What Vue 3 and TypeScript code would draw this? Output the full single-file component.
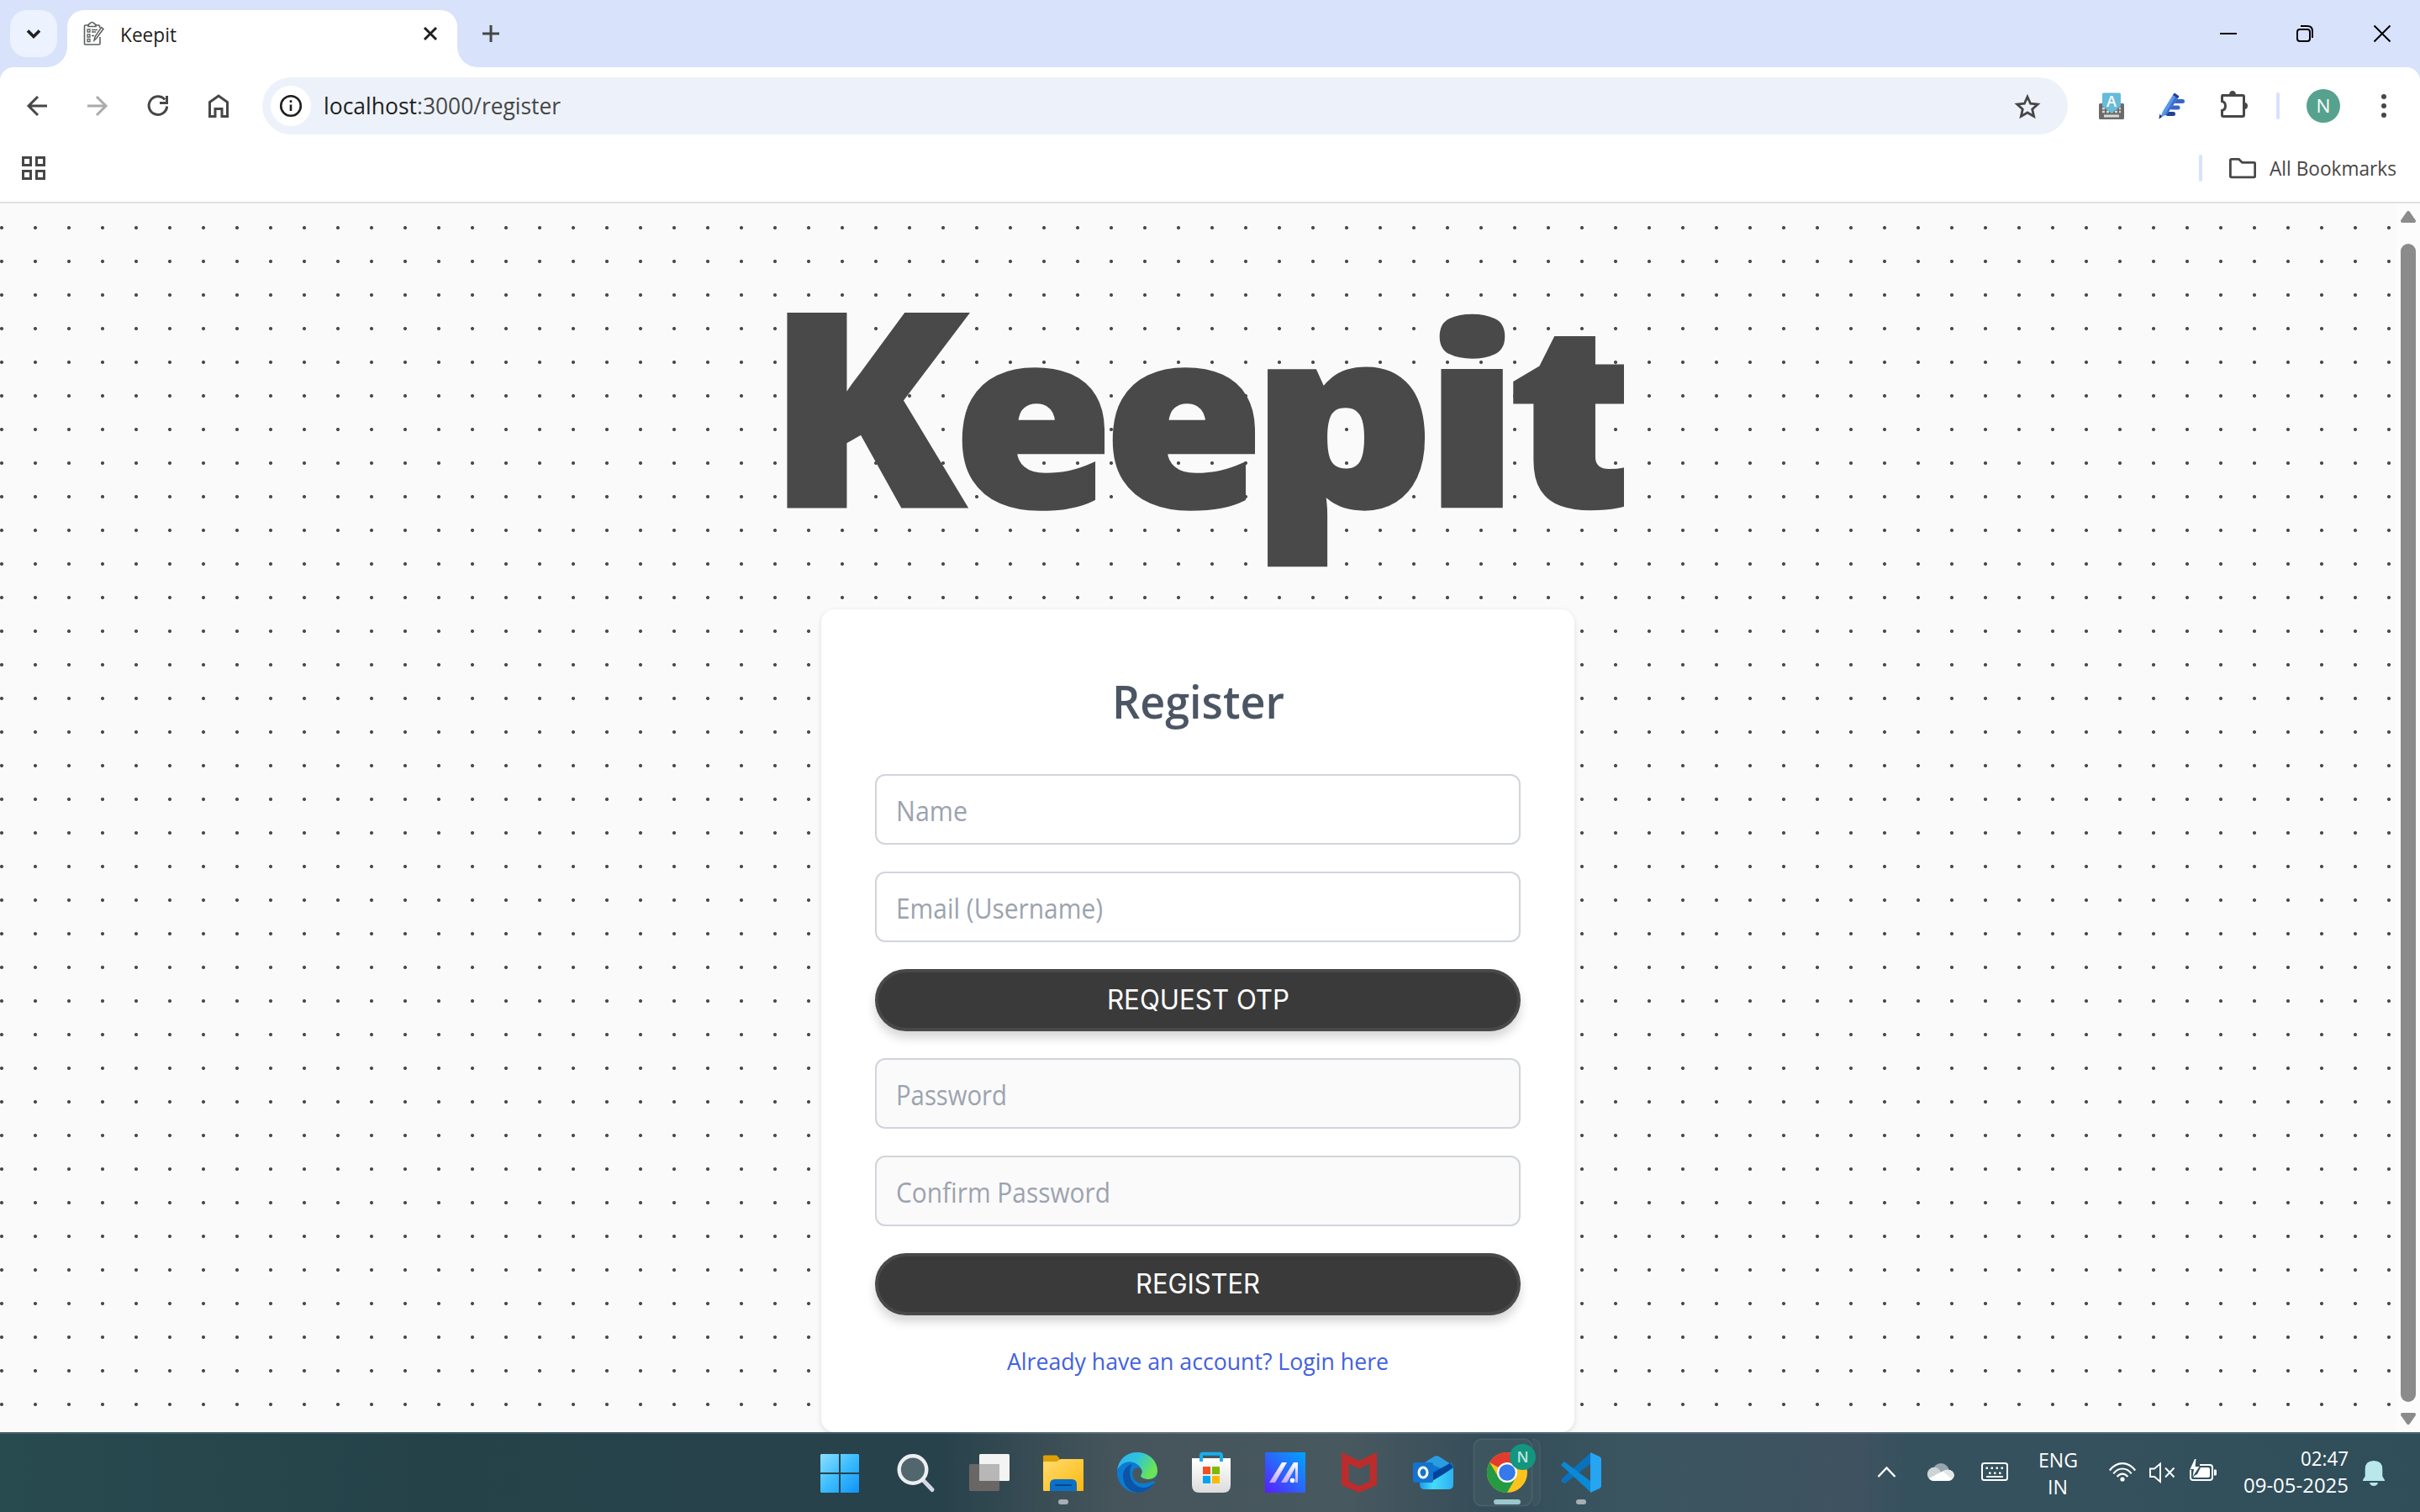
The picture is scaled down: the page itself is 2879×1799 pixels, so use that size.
<script setup lang="ts">
import { h } from 'vue'

interface FitProps {
  text: string
  w: number
  size: number
  cap: number
  font?: string
  weight?: number
}

// One line of text set to an exact width; its box is as tall as the capitals.
const Fit = (p: FitProps) =>
  h('svg', { width: p.w, height: p.cap, style: 'overflow:visible;flex:none;display:block' }, [
    h(
      'text',
      {
        x: 0,
        y: p.cap,
        textLength: p.w,
        lengthAdjust: 'spacingAndGlyphs',
        fill: 'currentColor',
        style: { fontFamily: p.font ?? '"Open Sans","Noto Sans",sans-serif', fontSize: p.size + 'px', fontWeight: p.weight ?? 400 },
      },
      p.text,
    ),
  ])
Fit.props = ['text', 'w', 'size', 'cap', 'font', 'weight']

// Wordmark letters: origin, horizontal and vertical scale, extra weight.
const letters = [
  { k: 'K', c: 'K', x: 912, y: 602.5, sx: 1.06, sy: 0.985, s: 4 },
  { k: 'e1', c: 'e', x: 1135, y: 602, sx: 0.94, sy: 0.885, s: 6 },
  { k: 'e2', c: 'e', x: 1314, y: 602, sx: 0.94, sy: 0.885, s: 6 },
  { k: 'p', c: 'p', x: 1489, y: 602, sx: 1.04, sy: 0.89, s: 6 },
  { k: 'i', c: 'i', x: 1692.5, y: 602.5, sx: 1.11, sy: 0.9, s: 4 },
  { k: 't', c: 't', x: 1793, y: 602.5, sx: 1.11, sy: 0.93, s: 4 },
]
const keyDots = [2363, 2369, 2375, 2381]
</script>

<template>
  <div class="screen">
    <header class="tabs">
      <div class="tab-search">
        <svg width="56" height="56" viewBox="12 12 56 56"><path d="M33 36.5l7 7 7-7" fill="none" stroke="#1f1f1f" stroke-width="3.6" /></svg>
      </div>
      <div class="tab">
        <svg class="fav" width="28" height="30" viewBox="98 25 28 30" fill="none" stroke="#5c5f61" stroke-width="1.6">
          <path d="M105 30h-3.500q-1 0-1 1v21q0 1 1 1h16.500q1 0 1-1v-8M114 30h3.500q1 0 1 1v2" />
          <path d="M105 31.500v-2l2-1.500q1-1.500 2.500-1.500t2.500 1.500l2 1.500v2z" />
          <path d="M104 35h3v3h-3zM104 41h3v3h-3zM104 46.500h3v3h-3zM109 35.500h7M109 38h5M109 42.500h3" stroke-width="1.300" />
          <path d="M120.500 32.500l2.500 1.800-8 11-3 2.700 1-4.200z" stroke-width="1.500" />
        </svg>
        <Fit class="tab-title" text="Keepit" :w="67" :size="24" :cap="17" />
        <svg class="tab-close" width="24" height="24" viewBox="500 28 24 24"><path d="M505 33l14 14M519 33l-14 14" stroke="#1f1f1f" stroke-width="3" /></svg>
      </div>
      <svg class="plus" width="20" height="20" viewBox="0 0 20 20"><path d="M10 0v20M0 10h20" stroke="#444746" stroke-width="3" /></svg>
      <svg class="winctl" width="220" height="40" viewBox="2630 20 220 40" fill="none" stroke="#000" stroke-width="2">
        <path d="M2641 40h20" />
        <rect x="2733" y="35" width="15" height="14" rx="3" />
        <path d="M2737 31h8q6 0 6 6v8" />
        <path d="M2824.500 30.500l19 19M2843.500 30.500l-19 19" />
      </svg>
    </header>

    <div class="toolwrap">
      <div class="toolbar">
        <svg class="nav" width="248" height="40" viewBox="28 106 248 40" fill="none" stroke="#474747" stroke-width="3">
          <path d="M56 126H34.500M45 115L34 126l11 11" />
          <path d="M104 126h21.500M115 115l11 11-11 11" stroke="#ababab" />
          <path d="M198.700 126.500a10.800 10.800 0 1 1-2.600-8" />
          <path d="M198.500 114v8.500H190" />
          <path d="M249.500 138.500v-17l10.500-7.500 10.500 7.500v17h-6.500v-9h-8v9z" />
        </svg>
        <div class="omni">
          <svg width="48" height="48" viewBox="322 102 48 48">
            <circle cx="346" cy="126" r="24" fill="#fff" />
            <circle cx="346" cy="126" r="11.800" fill="none" stroke="#1f1f1f" stroke-width="2.600" />
            <path d="M346 124.500v7.500M346 119.300v2.700" stroke="#1f1f1f" stroke-width="2.600" />
          </svg>
          <Fit class="host" text="localhost" :w="111" :size="27" :cap="19" />
          <Fit class="path" text=":3000/register" :w="171" :size="27" :cap="19" />
          <svg class="star" width="32" height="32" viewBox="2396 109 32 32"><path d="M2412 114.200l3.600 8 8.600.8-6.500 5.900 1.900 8.600-7.600-4.500-7.600 4.500 1.900-8.600-6.500-5.900 8.600-.8z" fill="none" stroke="#474747" stroke-width="2.800" /></svg>
        </div>
        <svg class="ext" width="360" height="44" viewBox="2490 104 360 44">
          <rect x="2497" y="123" width="30" height="19" rx="1.500" fill="#6b6b6b" />
          <path d="M2501 129h22M2501 133h22" stroke="#d5d5d5" stroke-width="2.600" stroke-dasharray="3 2" />
          <path d="M2503 138h18" stroke="#dadada" stroke-width="3" />
          <path d="M2501 112q0-1.500 1.500-1.500h19q1.500 0 1.500 1.500v14l-11 9-11-9z" fill="#66bbd8" />
          <text x="2512" y="127" text-anchor="middle" fill="#fff" font-family="Open Sans" font-weight="600" font-size="18">A</text>
          <path d="M2588 120.500h8.500M2584 128h7" stroke="#3c64c8" stroke-width="5" stroke-linecap="round" />
          <path d="M2579 135.500h6.500" stroke="#25428f" stroke-width="5" stroke-linecap="round" />
          <path d="M2585.500 112l6 4-13.500 20-6 3-2.500 2 4-9.500z" fill="#5a97ea" />
          <path d="M2588.500 114l3 2-13.500 20-3 1z" fill="#3e6fd0" />
          <path d="M2587 110.500l5.500 4-1.500 2.500-6-4z" fill="#213f92" />
          <path d="M2569.500 135.500l-1.200 6 3.700-2.500z" fill="#1d367e" />
          <path d="M2644 113.500h24q1.500 0 1.500 1.500v22q0 1.500-1.500 1.500h-23q-1.500 0-1.500-1.500v-5.500q4-1 4-5.500t-4-5.500v-5.500q0-1.500.5-1.500z" fill="none" stroke="#474747" stroke-width="3" />
          <path d="M2652 112.500a4 4.500 0 0 1 8 0zM2670 122a4 4 0 0 1 0 8z" fill="#474747" />
          <rect x="2708" y="110" width="4" height="32" rx="2" fill="#d7e2fb" />
          <circle cx="2764" cy="126" r="20" fill="#56a28f" />
          <text x="2764" y="134" text-anchor="middle" fill="#fff" font-family="Open Sans" font-size="22.500">N</text>
          <g fill="#474747"><circle cx="2836" cy="115" r="3" /><circle cx="2836" cy="126" r="3" /><circle cx="2836" cy="137" r="3" /></g>
        </svg>
      </div>
      <div class="bookmarks">
        <svg width="28" height="28" viewBox="0 0 28 28" fill="none" stroke="#474747" stroke-width="3"><path d="M1.500 1.500h9v9h-9zM17.500 1.500h9v9h-9zM1.500 17.500h9v9h-9zM17.500 17.500h9v9h-9z" /></svg>
        <span class="bsep"></span>
        <svg class="folder" width="32" height="26" viewBox="2652 187 32 26"><path d="M2655 189.400h8.500l4 4h14q1.200 0 1.200 1.200v15q0 1.200-1.200 1.200h-26.500q-1.600 0-1.600-1.200v-19q0-1.200 1.600-1.200z" fill="none" stroke="#474747" stroke-width="2.800" /></svg>
        <Fit class="btext" text="All Bookmarks" :w="151" :size="24" :cap="17" />
      </div>
    </div>

    <main class="view">
      <div class="page">
        <svg class="logo" width="1014" height="360" viewBox="918 342 1014 360">
          <g class="logo-text">
            <text v-for="l in letters" :key="l.k" :transform="`translate(${l.x} ${l.y}) scale(${l.sx} ${l.sy})`" :stroke-width="l.s">{{ l.c }}</text>
          </g>
        </svg>
        <section class="card">
          <Fit text="Register" :w="205" :size="54" :cap="38" :weight="600" />
          <div class="field first"><Fit text="Name" :w="85" :size="32" :cap="23" /></div>
          <div class="field"><Fit text="Email (Username)" :w="246" :size="32" :cap="23" /></div>
          <div class="btn"><Fit text="REQUEST OTP" :w="217" :size="32" :cap="23" font="Inter, sans-serif" /></div>
          <div class="field off"><Fit text="Password" :w="132" :size="32" :cap="23" /></div>
          <div class="field off"><Fit text="Confirm Password" :w="255" :size="32" :cap="23" /></div>
          <div class="btn"><Fit text="REGISTER" :w="148" :size="32" :cap="23" font="Inter, sans-serif" /></div>
          <Fit class="link" text="Already have an account? Login here" :w="454" :size="28" :cap="20" />
        </section>
      </div>
      <div class="scroll">
        <svg width="20" height="16" viewBox="0 0 20 16"><path d="M10 3l7 10H3z" fill="#8b8b8b" stroke="#8b8b8b" stroke-width="4" stroke-linejoin="round" /></svg>
        <div class="thumb"></div>
        <svg width="20" height="16" viewBox="0 0 20 16"><path d="M10 13l7-10H3z" fill="#8b8b8b" stroke="#8b8b8b" stroke-width="4" stroke-linejoin="round" /></svg>
      </div>
    </main>

    <footer class="taskbar">
      <svg class="apps" width="960" height="95" viewBox="970 1704 960 95">
        <defs>
          <linearGradient id="win" x1="0" y1="0" x2="1" y2="1"><stop offset="0" stop-color="#8be0ff" /><stop offset=".5" stop-color="#3cbcff" /><stop offset="1" stop-color="#0f93f8" /></linearGradient>
          <linearGradient id="fold" x1="0" y1="0" x2="1" y2="1"><stop offset="0" stop-color="#ffdc70" /><stop offset="1" stop-color="#fcb90f" /></linearGradient>
          <linearGradient id="edg" x1="0" y1="0" x2="1" y2=".4"><stop offset="0" stop-color="#2bb4f4" /><stop offset=".5" stop-color="#2fc2df" /><stop offset="1" stop-color="#6be552" /></linearGradient>
          <linearGradient id="asus" x1="0" y1="1" x2="1" y2="0"><stop offset="0" stop-color="#5a1cff" /><stop offset=".5" stop-color="#2b66fb" /><stop offset="1" stop-color="#00a6ff" /></linearGradient>
          <linearGradient id="bag" x1="0" y1="0" x2="0" y2="1"><stop offset="0" stop-color="#fff" /><stop offset="1" stop-color="#dcdcdc" /></linearGradient>
          <linearGradient id="ms" x1="0" y1="1" x2="0" y2="0"><stop offset="0" stop-color="#c3a5f8" /><stop offset="1" stop-color="#fff" /></linearGradient>
          <linearGradient id="olk" x1="0" y1="0" x2="1" y2="0"><stop offset="0" stop-color="#1a9ce8" /><stop offset=".4" stop-color="#45dcfb" /><stop offset="1" stop-color="#2cb0f2" /></linearGradient>
        </defs>
        <path d="M977 1730h21v22h-22v-21zM1000 1730h21l1 1v21h-22zM976 1754h22v22h-21l-1-1zM1000 1754h22v21l-1 1h-21z" fill="url(#win)" />
        <path d="M1099 1762l10 10.500" stroke="#d5d9e2" stroke-width="5" stroke-linecap="round" />
        <circle cx="1086" cy="1748.500" r="16.300" fill="#51666d" stroke="#eceef1" stroke-width="4.400" />
        <rect x="1165" y="1730" width="36" height="32" rx="1.500" fill="#f3f3f3" />
        <rect x="1153" y="1742" width="36" height="32" rx="1.500" fill="#6a6666" />
        <path d="M1165 1742h24v20h-24z" fill="#b7b7b7" />
        <path d="M1241 1740v-7q0-1.500 1.500-1.500h14q1.500 0 4.500 5v5z" fill="#dd9f04" />
        <path d="M1241 1740q0-1 1-1h15l5-3h26q1 0 1 1v36q0 1-1 1h-46q-1 0-1-1z" fill="url(#fold)" />
        <path d="M1249 1774v-8q0-6 6-6h20q6 0 6 6v8z" fill="#0d70c4" /><path d="M1256 1767h18" stroke="#04498f" stroke-width="2" stroke-linecap="round" />
        <rect x="1259" y="1784" width="12" height="6" rx="3" fill="#a6afb3" />
        <circle cx="1353" cy="1752" r="24" fill="#0b7bd3" />
        <path d="M1329.200 1749C1331 1736 1340 1728 1353 1728c14 0 24 10.500 24 22 0 7-6 10-11 10-6 0-9-2-9-4 0-1.500 1.500-2 1.500-5 0-4-4-9-10-11-8-2.500-15 1-19.300 9z" fill="url(#edg)" />
        <path d="M1347 1742c-6 9-2 23 8 27 7 2.500 13 0 18-4-4 6-11 11-20 11-11-2-17-10-17-20 0-7 5-13 11-14z" fill="#0d54a4" />
        <path d="M1349 1748c-4 6-1 16 9 17 8 .5 14-3 15-2.300l2 .8 2.500-9c-2 4-6 5.500-11 5.500-6 0-9.500-2.300-9.500-4 0-1.500 1.600-2.500 1.600-5 0-5-6-6-9.600-3z" fill="#47575e" />
        <path d="M1418 1735h46v32q0 9-9 9h-28q-9 0-9-9z" fill="url(#bag)" />
        <path d="M1429 1739v-7q0-2.200 2.200-2.200h19.600q2.200 0 2.200 2.200v7" fill="none" stroke="#18aeee" stroke-width="4" />
        <path d="M1431 1745h9v9h-9z" fill="#f25022" /><path d="M1442 1745h9v9h-9z" fill="#7fba00" /><path d="M1431 1756h9v9h-9z" fill="#00a4ef" /><path d="M1442 1756h9v9h-9z" fill="#ffb900" />
        <path d="M1505 1728h48v48h-48z" fill="url(#asus)" />
        <path d="M1510 1764l15-24h6l-14 24zM1524 1764l15-24h5v24h-3v-18l-10 18z" fill="url(#ms)" /><circle cx="1537.500" cy="1761.500" r="2.800" fill="#fff" />
        <path d="M1596 1728l21 10 21-10v39l-21 9-21-9zM1604.500 1741.500v21l12.500 5.500 12.500-5.500v-21l-12.500 6z" fill="#bb2d2c" fill-rule="evenodd" />
        <path d="M1689 1744l17-11q3-1.500 6 0l17 11v14h-40z" fill="#2a9de2" />
        <path d="M1697 1740l20 8 10-8 2 5-24 14h-8z" fill="#0a78d4" /><path d="M1705 1752l20-11 4 5-16 11-8 3z" fill="#03449b" />
        <path d="M1689 1756l12 8 28-17v19q0 6-6 6h-28q-6 0-6-6z" fill="url(#olk)" />
        <rect x="1681" y="1740" width="24" height="24" rx="2" fill="#1373cf" /><ellipse cx="1693" cy="1752" rx="5" ry="6" fill="none" stroke="#fff" stroke-width="3" />
        <path d="M1823 1712.500q9 0 9 9v61q0 9-9 9" fill="#3b545f" stroke="#4b626c" />
        <rect x="1753.500" y="1712.500" width="69" height="79" rx="9" fill="#3d555f" stroke="#4b626c" stroke-width="1.500" />
        <circle cx="1793" cy="1752" r="24" fill="#fcc31e" />
        <path d="M1793 1752L1772.200 1740A24 24 0 0 1 1813.800 1740z" fill="#e33b2e" />
        <path d="M1783 1758L1772.200 1740A24 24 0 0 0 1793 1776l10.400-18-10.400 4z" fill="#259a43" />
        <circle cx="1793" cy="1752" r="12" fill="#fff" /><circle cx="1793" cy="1752" r="9.800" fill="#3579ea" />
        <circle cx="1811.500" cy="1733.500" r="15.500" fill="#13957f" />
        <text x="1811.500" y="1740" text-anchor="middle" font-size="18" font-weight="600" fill="#b9e3dc" font-family="Open Sans">N</text>
        <rect x="1777" y="1784" width="32" height="6" rx="3" fill="#9bc6ce" />
        <path d="M1893 1728l-33.500 30q-1.500 1.500-2.500 4l1 1.500 3.500 1.800L1893 1741z" fill="#0a72bd" />
        <path d="M1857 1743l4-4 32 24v13z" fill="#0a8ad6" />
        <path d="M1892 1728l11 5q2 1 2 3v32q0 2-2 3l-11 5z" fill="#27a4f2" />
        <rect x="1875" y="1784" width="12" height="6" rx="3" fill="#a6afb3" />
      </svg>
      <svg class="tray1" width="170" height="60" viewBox="2230 1722 170 60" fill="none" stroke="#fff" stroke-width="2.400">
        <path d="M2234.500 1757l10-10.500 10 10.500" />
        <g stroke="none"><circle cx="2309" cy="1751" r="10" fill="#97a5ac" /><circle cx="2301" cy="1754" r="8.200" fill="#ccd3d6" /><path d="M2295 1759l13-7q5-3 10-3a6.500 6.500 0 0 1 0 13h-17q-4 0-6-3z" fill="#fff" /><path d="M2311 1750.500q3-2 6.500-2 7 .5 7.500 7.500l-2.500 4z" fill="#e3e7e9" /></g>
        <rect x="2358" y="1741" width="30" height="20" rx="2.500" stroke-width="2" />
        <g fill="#fff" stroke="none"><rect v-for="x in keyDots" :key="x" :x="x - .5" y="1745.500" width="2.500" height="2.500" /><rect v-for="x in keyDots.slice(0, 3)" :key="'b' + x" :x="x + 3" y="1751.500" width="2.500" height="2.500" /></g>
        <path d="M2363 1757h20" stroke-width="2" />
      </svg>
      <div class="lang"><Fit text="ENG" :w="47" :size="24" :cap="17" /><Fit text="IN" :w="24" :size="24" :cap="17" /></div>
      <svg class="tray2" width="132" height="60" viewBox="2508 1722 132 60" fill="none" stroke="#fff" stroke-width="2.200">
        <path d="M2509.800 1749.500q6.500-8.300 15.200-8.300t15.200 8.300M2514.300 1753.300q4.500-5.800 10.700-5.800t10.700 5.800M2518.600 1757q2.700-3.400 6.400-3.400t6.400 3.400" />
        <circle cx="2525" cy="1760" r="2.600" fill="#fff" stroke="none" />
        <path d="M2558 1747.500h5l7-6v21.500l-7-6h-5zM2576 1746.500l10.500 11M2586.500 1746.500l-10.500 11" stroke-width="1.900" />
        <path d="M2617 1743h12q3 0 3 3v12q0 3-3 3h-20q-3 0-3-3v-10" stroke-width="2" />
        <path d="M2634 1748.500h2q1 0 1 1.500v4q0 1.500-1 1.500h-2zM2618 1746h9q2 0 2 2v8q0 2-2 2h-16q-2 0-2-1.500l5-2.500z" fill="#fff" stroke="none" />
        <path d="M2611 1736l-5.500 12h4.500l-1.500 9 8-12h-5l1-9z" fill="#fff" stroke="#34515d" stroke-width="1.600" paint-order="stroke" />
      </svg>
      <div class="clock"><Fit text="02:47" :w="57" :size="24" :cap="17" /><Fit text="09-05-2025" :w="125" :size="24" :cap="17" /></div>
      <svg class="bell" width="28" height="32" viewBox="2810 1737 28 32"><path d="M2824 1738q10.300 0 10.300 10v8.500l2.700 4.500v1h-26v-1l2.700-4.500v-8.500q0-10 10.300-10z" fill="#b9e7ea" /><path d="M2819 1764h10q-1 4-5 4t-5-4z" fill="#b9e7ea" /></svg>
    </footer>
  </div>
</template>

<style>
html, body { margin: 0; background: #fff; overflow: hidden; }
</style>

<style scoped>
.screen { width: 2879px; height: 1799px; display: flex; flex-direction: column; overflow: hidden; background: #fff; }
svg { flex: none; display: block; }
.tabs { height: 80px; background: #d8e2fb; display: flex; align-items: flex-start; }
.tab-search { width: 56px; height: 56px; border-radius: 20px; background: #ecf2fe; margin: 12px 0 0 12px; }
.tab { position: relative; width: 464px; height: 68px; margin: 12px 0 0 12px; background: #fff; border-radius: 20px 20px 0 0; display: flex; align-items: flex-start; }
.tab::before, .tab::after { content: ""; position: absolute; bottom: 0; width: 24px; height: 24px; }
.tab::before { left: -24px; background: radial-gradient(circle at 0 0, transparent 23.500px, #fff 24px); }
.tab::after { right: -24px; background: radial-gradient(circle at 100% 0, transparent 23.500px, #fff 24px); }
.fav { margin: 13px 0 0 18px; }
.tab-title { margin: 21px 0 0 17px; color: #1f1f1f; }
.tab-close { margin: 16px 0 0 290px; }
.plus { margin: 30px 0 0 30px; }
.winctl { margin: 20px 29px 0 auto; }
.toolwrap { background: linear-gradient(#d8e2fb 20px, #fff 20px); height: 162px; }
.toolbar { height: 92px; background: #fff; border-radius: 16px 16px 0 0; display: flex; align-items: center; }
.nav { margin-left: 28px; }
.omni { width: 2106px; margin: 0 0 0 36px; padding: 0 32px 0 10px; height: 68px; border-radius: 34px; background: #edf2fa; display: flex; align-items: center; }
.host { color: #1f1f1f; margin-left: 15px; }
.path { color: #474747; }
.star { margin-left: auto; }
.ext { margin-left: 30px; }
.bookmarks { height: 56px; padding: 0 28px 12px 26px; border-bottom: 2px solid #e0e0e0; display: flex; align-items: center; }
.bsep { width: 4px; height: 32px; border-radius: 2px; background: #d7e2fb; margin: 0 32px 0 auto; }
.btext { margin-left: 16px; color: #474747; }
.view { height: 1462px; display: flex; }
.page { width: 2850px; background: radial-gradient(circle at 2px 2px, #4d4d4d 1.800px, transparent 2.300px) 0 27px / 40px 40px, #fafafa; display: flex; flex-direction: column; align-items: center; }
.logo { margin-top: 100px; }
.logo-text { font-family: "Noto Sans", "Open Sans", sans-serif; font-weight: 900; font-size: 325px; fill: #494949; stroke: #494949; }
.logo-text text { vector-effect: non-scaling-stroke; }
.card { width: 896px; height: 979px; margin-top: 23px; box-sizing: border-box; padding: 92px 64px 0; background: #fff; border-radius: 16px; box-shadow: 0 2px 6px rgba(0, 0, 0, .12); display: flex; flex-direction: column; align-items: center; color: #4b5563; }
.field, .btn { width: 768px; box-sizing: border-box; flex: none; display: flex; align-items: center; }
.field { height: 84px; margin-bottom: 32px; padding: 5px 0 0 23px; border: 2px solid #d1d5db; border-radius: 12px; color: #9ca3af; }
.first { margin-top: 66px; }
.off { background: #fafafa; }
.btn { height: 74px; justify-content: center; margin-bottom: 32px; padding-bottom: 2px; border: 4px solid #494949; border-radius: 37px; background: #3a3a3a; color: #fff; box-shadow: 0 8px 12px rgba(0, 0, 0, .16); }
.link { color: #4361e0; margin-top: 13px; }
.scroll { width: 29px; box-sizing: border-box; padding: 8px 0; background: #fcfcfc; display: flex; flex-direction: column; align-items: center; }
.thumb { width: 18px; height: 1378px; margin: 24px 0 12px; border-radius: 9px; background: #8b8b8b; }
.taskbar { height: 95px; box-sizing: border-box; display: flex; align-items: flex-start; color: #fff; background: linear-gradient(rgba(255, 255, 255, .13) 2px, transparent 2px), linear-gradient(90deg, #284b50 0, #254249 500px, #28424b 1120px, #46555c 1330px, #48585f 1600px, #334c59 1790px, #3a5560 1930px, #3f5260 2210px, #34515d 2280px, #34515d 2500px, #2f4e59 2879px); }
.apps { margin-left: 970px; }
.tray1 { margin: 18px 0 0 300px; }
.lang { width: 48px; margin: 25px 0 0 24px; display: flex; flex-direction: column; align-items: center; gap: 15px; }
.tray2 { margin: 18px 0 0 36px; }
.clock { width: 125px; margin: 23px 0 0 29px; display: flex; flex-direction: column; align-items: flex-end; gap: 15px; }
.bell { margin: 33px 0 0 16px; }
</style>
